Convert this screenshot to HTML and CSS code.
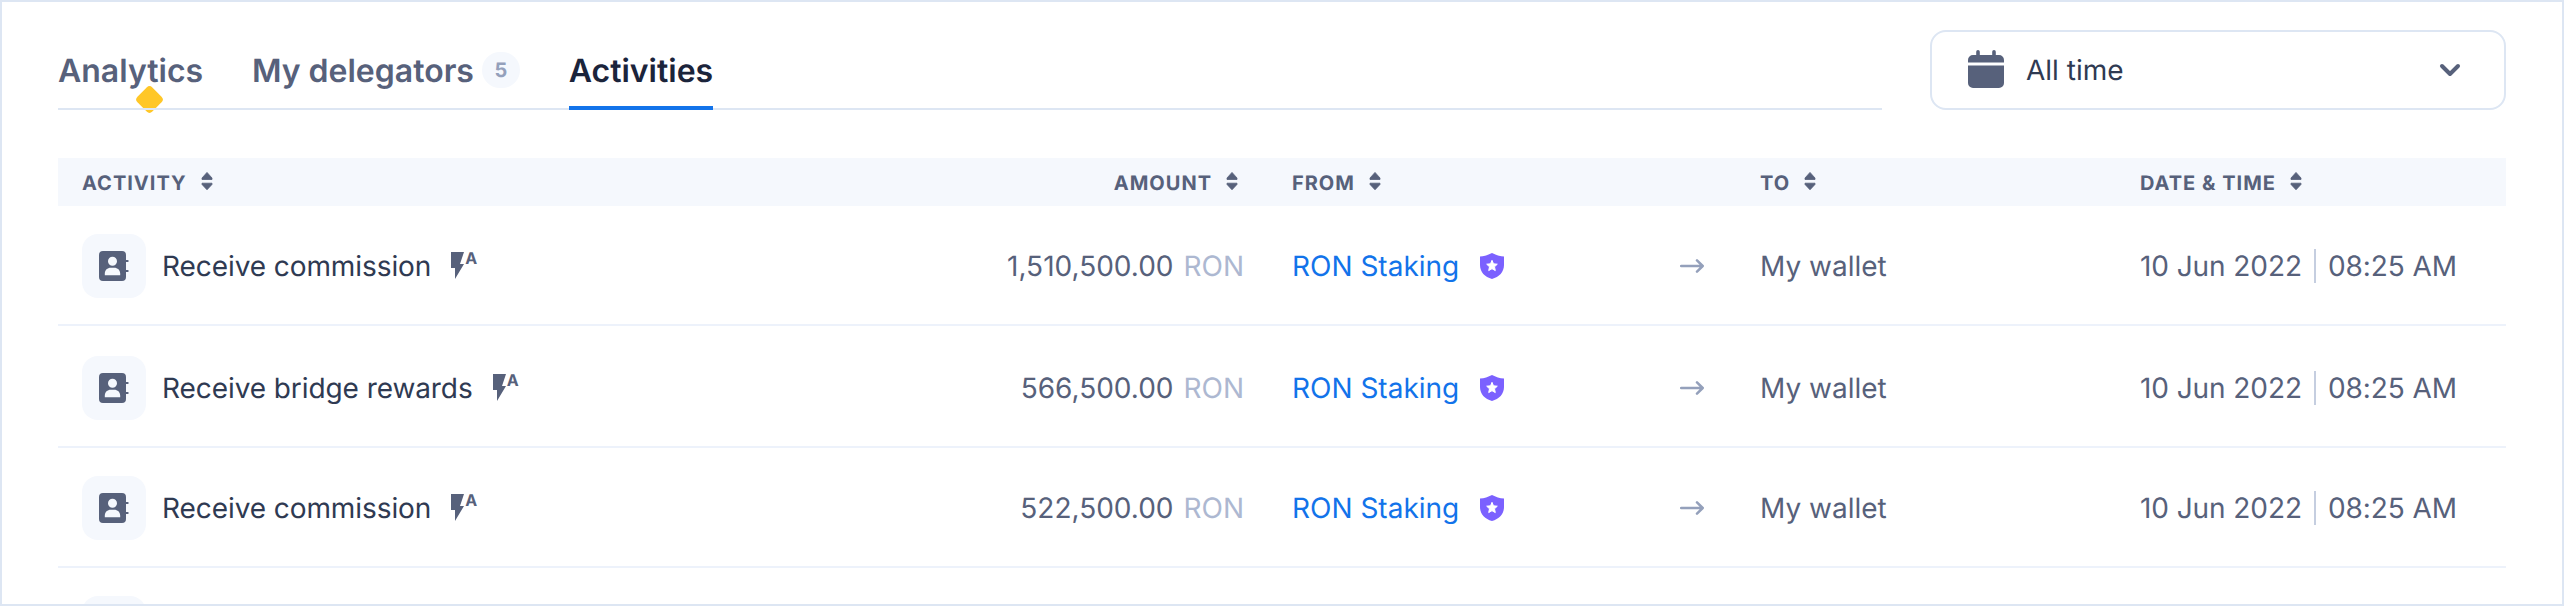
FILE: index.html
```html
<!DOCTYPE html>
<html lang="en">
<head>
<meta charset="utf-8">
<title>Activities</title>
<link rel="stylesheet" href="styles.css">
</head>
<body>
<svg class="defs" width="0" height="0">
  <symbol id="sort" viewBox="0 0 24 24"><path d="M12 3.400 17 9v1.500H7V9zM7 14.200h10v1.200L12 20.800 7 15.400z" fill="currentColor" stroke="currentColor" stroke-width=".8" stroke-linejoin="round"/></symbol>
  <symbol id="book" viewBox="0 0 30 30"><path fill="currentColor" fill-rule="evenodd" d="M4 0h19a4 4 0 0 1 4 4v5h1.700a1 1 0 0 1 0 2H27v8h1.700a1 1 0 0 1 0 2H27v5a4 4 0 0 1-4 4H4a4 4 0 0 1-4-4V4a4 4 0 0 1 4-4zM13.500 5.800a4.500 4.500 0 1 0 0 9 4.500 4.500 0 0 0 0-9zM5.800 24.200h15.400v-1.500c0-3.800-2.600-6-6-6h-3.400c-3.400 0-6 2.200-6 6z"/></symbol>
  <symbol id="bolt" viewBox="0 0 14 28"><path fill="currentColor" d="M0 0h13L9 12h4L4 27V16H0z"/></symbol>
  <symbol id="shield" viewBox="0 0 24 26"><path fill="#7b61ff" d="M12 0c3.800 2 7.800 3.200 12 3.600V12c0 7-4.800 12-12 14C4.800 24 0 19 0 12V3.600C4.200 3.200 8.200 2 12 0z"/><path fill="#fff" stroke="#fff" stroke-linejoin="round" d="m12 7.300 1.500 3.500 3.800.4-2.800 2.600.8 3.800-3.300-1.900-3.300 1.900.8-3.800-2.800-2.600 3.800-.4z"/></symbol>
  <symbol id="arrow" viewBox="0 0 24 14"><path d="M1.200 7h21M17 1.400 22.700 7 17 12.600" fill="none" stroke="currentColor" stroke-width="2.500" stroke-linecap="round" stroke-linejoin="round"/></symbol>
</svg>
<main class="panel">
  <header class="top">
    <nav class="tabs">
      <a class="tab">Analytics<span class="diamond"></span></a>
      <a class="tab tab-delegators">My delegators<span class="count">5</span></a>
      <a class="tab active">Activities</a>
    </nav>
    <div class="select">
      <svg class="calendar" width="36" height="38" viewBox="0 0 36 38"><path fill="currentColor" d="M8.200 5V1.800a1.800 1.800 0 0 1 3.600 0V5h12.400V1.800a1.800 1.800 0 0 1 3.600 0V5H31a5 5 0 0 1 5 5v2.500H0V10a5 5 0 0 1 5-5zM0 15.500h36V33a5 5 0 0 1-5 5H5a5 5 0 0 1-5-5z"/></svg>
      <span class="select-label">All time</span>
      <svg class="chevron" width="24" height="16" viewBox="0 0 24 16"><path d="M4 4l8 8 8-8" fill="none" stroke="currentColor" stroke-width="4" stroke-linecap="round" stroke-linejoin="round"/></svg>
    </div>
  </header>
  <section class="table">
    <div class="row head">
      <div class="cell">ACTIVITY<svg class="sort"><use href="#sort"/></svg></div>
      <div class="cell right">AMOUNT<svg class="sort"><use href="#sort"/></svg></div>
      <div class="cell from">FROM<svg class="sort"><use href="#sort"/></svg></div>
      <div class="cell to">TO<svg class="sort"><use href="#sort"/></svg></div>
      <div class="cell">DATE &amp; TIME<svg class="sort"><use href="#sort"/></svg></div>
    </div>
    <div class="row">
      <div class="cell name"><span class="badge"><svg class="book"><use href="#book"/></svg></span>Receive commission<span class="auto"><svg class="bolt"><use href="#bolt"/></svg>A</span></div>
      <div class="cell right">1,510,500.00<span class="unit">RON</span></div>
      <div class="cell from"><a class="link">RON Staking</a><svg class="shield"><use href="#shield"/></svg><svg class="arrow"><use href="#arrow"/></svg></div>
      <div class="cell to">My wallet</div>
      <div class="cell date">10 Jun 2022<span class="bar"></span>08:25 AM</div>
    </div>
    <div class="row tall">
      <div class="cell name"><span class="badge"><svg class="book"><use href="#book"/></svg></span>Receive bridge rewards<span class="auto"><svg class="bolt"><use href="#bolt"/></svg>A</span></div>
      <div class="cell right">566,500.00<span class="unit">RON</span></div>
      <div class="cell from"><a class="link">RON Staking</a><svg class="shield"><use href="#shield"/></svg><svg class="arrow"><use href="#arrow"/></svg></div>
      <div class="cell to">My wallet</div>
      <div class="cell date">10 Jun 2022<span class="bar"></span>08:25 AM</div>
    </div>
    <div class="row">
      <div class="cell name"><span class="badge"><svg class="book"><use href="#book"/></svg></span>Receive commission<span class="auto"><svg class="bolt"><use href="#bolt"/></svg>A</span></div>
      <div class="cell right">522,500.00<span class="unit">RON</span></div>
      <div class="cell from"><a class="link">RON Staking</a><svg class="shield"><use href="#shield"/></svg><svg class="arrow"><use href="#arrow"/></svg></div>
      <div class="cell to">My wallet</div>
      <div class="cell date">10 Jun 2022<span class="bar"></span>08:25 AM</div>
    </div>
    <div class="row">
      <div class="cell name"><span class="badge"></span></div>
    </div>
  </section>
</main>
</body>
</html>
```
FILE: styles.css
```css
* { box-sizing: border-box; }
body { margin: 0; background: #fff; font-family: Inter, sans-serif; color: #57617b; text-rendering: geometricPrecision; }
.defs { position: absolute; }
.panel { position: relative; z-index: 0; height: 606px; overflow: hidden; border: 2px solid #dde6f3; padding: 28px 56px 0; background: #fff; }
.top { display: flex; gap: 48px; height: 80px; }
.tabs { flex: 1; display: flex; gap: 48.800px; box-shadow: inset 0 -2px #dde6f3; }
.tab { position: relative; display: flex; align-items: center; font-size: 32px; font-weight: 600; white-space: nowrap; }
.tab.active { color: #1b243b; box-shadow: inset 0 -4px #1273ea; }
.count { width: 38px; height: 36px; margin-left: 8px; border-radius: 18px; background: #f5f8fd; color: #94a0bb; font-size: 20px; font-weight: 700; display: flex; align-items: center; justify-content: center; }
.diamond { position: absolute; left: 80.500px; top: 58.500px; width: 21px; height: 21px; border-radius: 4px; background: #ffc727; transform: rotate(45deg); z-index: -1; }
.select { width: 576px; border: 2px solid #dde6f3; border-radius: 16px; padding: 0 42px 0 36px; display: flex; align-items: center; font-size: 28px; color: #2f3a52; }
.select-label { flex: 1; margin-left: 22px; }
.calendar, .chevron { color: #57617b; }
.calendar { margin-bottom: 2px; }
.table { margin-top: 48px; font-size: 28px; }
.row { display: grid; grid-template-columns: 600px 562px 492px 404px 1fr; height: 120px; padding: 2px 24px 0; align-items: center; border-bottom: 2px solid #edf2fb; }
.row.tall { height: 122px; padding-top: 4px; }
.row.head { height: 48px; padding-top: 2px; border: 0; background: #f5f8fd; font-size: 20px; font-weight: 700; letter-spacing: 1px; }
.cell { display: flex; align-items: center; white-space: nowrap; }
.right { justify-content: flex-end; }
.from { padding-left: 48px; }
.to { padding-left: 24px; }
.sort { width: 24px; height: 24px; margin-left: 8px; margin-bottom: 4px; }
.name { color: #2f3a52; letter-spacing: -0.080px; }
.date { letter-spacing: -0.080px; }
.badge { width: 64px; height: 64px; border-radius: 16px; background: #f5f8fd; display: flex; align-items: center; justify-content: center; margin-right: 16px; color: #57617b; }
.book { width: 30px; height: 30px; }
.auto { display: flex; height: 28px; margin-left: 20px; color: #57617b; font-size: 16px; font-weight: 700; line-height: 13px; }
.bolt { width: 14px; height: 28px; }
.unit { margin-left: 10px; color: #adb8d1; }
.link { color: #1273ea; }
.shield { width: 24px; height: 26px; margin-left: 21px; }
.arrow { width: 24px; height: 14px; margin-left: auto; margin-right: 32px; color: #94a0bb; }
.bar { width: 2px; height: 34px; margin: 0 12px; background: #c5cee0; }
```
